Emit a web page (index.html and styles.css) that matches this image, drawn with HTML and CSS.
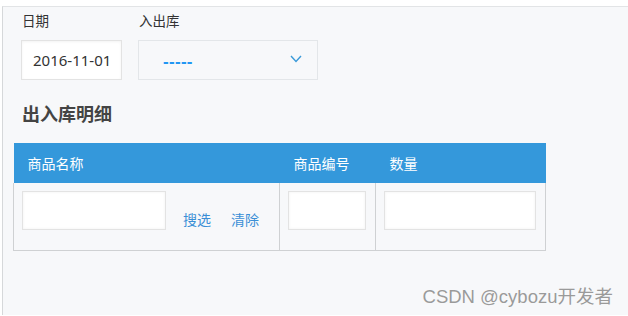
FILE: index.html
```html
<!DOCTYPE html>
<html lang="zh-CN">
<head>
    <meta charset="UTF-8">
    <title>出入库明细</title>
    <link rel="stylesheet" href="styles.css">
</head>
<body>
    <div class="page">
        <div class="filters">
            <div class="field">
                <label>日期</label>
                <div class="date-input">2016-11-01</div>
            </div>
            <div class="field">
                <label>入出库</label>
                <div class="select">
                    <span>-----</span>
                    <svg width="12" height="8" viewBox="0 0 12 8"><path d="M1 1 L6 6.5 L11 1" fill="none" stroke="#3a9ad9" stroke-width="1.4"/></svg>
                </div>
            </div>
        </div>

        <h2 class="title">出入库明细</h2>

        <table class="detail">
            <thead>
                <tr>
                    <th class="col-name">商品名称</th>
                    <th class="col-code">商品编号</th>
                    <th class="col-qty">数量</th>
                </tr>
            </thead>
            <tbody>
                <tr>
                    <td>
                        <div class="name-cell">
                            <div class="box name-box"></div>
                            <a class="link">搜选</a>
                            <a class="link">清除</a>
                        </div>
                    </td>
                    <td><div class="box"></div></td>
                    <td><div class="box"></div></td>
                </tr>
            </tbody>
        </table>

        <div class="watermark">CSDN @cybozu开发者</div>
    </div>
</body>
</html>
```

FILE: styles.css
```css
html, body {
    margin: 0;
    padding: 0;
    background-color: #fff;
}

body {
    font-family: "Noto Sans", "Noto Sans CJK SC", sans-serif;
    color: #333;
}

.page {
    position: relative;
    margin: 6px 0 0 2px;
    height: 309px;
    border-top: 1px solid #e2e4e6;
    border-left: 1px solid #d6d8da;
    background-color: #f7f8fa;
    padding: 4px 0 0 10px;
    box-sizing: border-box;
}

.filters {
    display: flex;
    gap: 16px;
    margin-left: 8px;
}

.field label {
    display: block;
    font-size: 13.5px;
    line-height: 20px;
    margin-left: 1px;
    margin-bottom: 9px;
    color: #333;
}

.date-input {
    width: 101px;
    height: 40px;
    box-sizing: border-box;
    border: 1px solid #e3e3e3;
    background-color: #fff;
    box-shadow: inset 0 1px 3px rgba(0, 0, 0, 0.05);
    font-size: 15px;
    line-height: 38px;
    padding-left: 11px;
    color: #333;
    white-space: nowrap;
}

.select {
    width: 180px;
    height: 40px;
    box-sizing: border-box;
    border: 1px solid #e3e6e9;
    background-color: #f7f8fa;
    display: flex;
    align-items: center;
    justify-content: space-between;
    padding: 0 15px 0 24px;
}

.select span {
    color: #2196f3;
    font-family: "Liberation Sans", sans-serif;
    font-size: 17px;
    font-weight: bold;
    letter-spacing: 0.3px;
    padding-top: 3px;
}

.select svg {
    margin-top: -2px;
}

.title {
    margin: 22px 0 17px 9px;
    font-size: 18px;
    line-height: 24px;
    font-weight: bold;
    color: #444;
}

.detail {
    border-collapse: collapse;
    table-layout: fixed;
    width: 532px;
}

.detail th {
    background-color: #3498db;
    color: #fff;
    font-size: 14px;
    font-weight: normal;
    text-align: left;
    height: 40px;
    padding: 0 14px;
    box-sizing: border-box;
}

.col-name { width: 266px; }
.col-code { width: 96px; }
.col-qty { width: 170px; }

.detail td {
    border: 1px solid #cfd1d3;
    border-top: none;
    padding: 8px 9px 20px 8px;
    vertical-align: top;
}

.box {
    height: 39px;
    box-sizing: border-box;
    border: 1px solid #e3e3e3;
    background-color: #fff;
    box-shadow: inset 0 0 3px rgba(0, 0, 0, 0.06);
}

.name-cell {
    display: flex;
    align-items: flex-end;
    white-space: nowrap;
}

.name-box {
    flex-shrink: 0;
    width: 144px;
    margin-right: 17px;
}

.link {
    color: #3a8fd6;
    font-size: 14px;
    line-height: 16px;
    margin-right: 20px;
    margin-bottom: 2px;
    cursor: pointer;
}

.watermark {
    position: absolute;
    right: 15px;
    bottom: 7px;
    font-family: "Liberation Sans", "Noto Sans CJK SC", sans-serif;
    font-size: 18.5px;
    color: #9a9a9a;
    text-shadow: 0 0 1px rgba(255, 255, 255, 0.8);
}
```
